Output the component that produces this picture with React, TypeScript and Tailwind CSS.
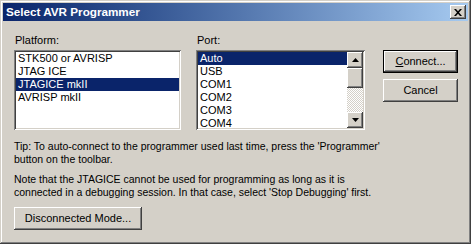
import React from 'react';

const font = { fontFamily: '"Liberation Sans", Arial, sans-serif' };

const raised =
    'bg-[#d4d0c8] shadow-[inset_-1px_-1px_#404040,inset_1px_1px_#ffffff,inset_-2px_-2px_#808080,inset_2px_2px_#d4d0c8]';
const sunken =
    'shadow-[inset_1px_1px_#808080,inset_-1px_-1px_#ffffff,inset_2px_2px_#404040,inset_-2px_-2px_#d4d0c8]';

const Arrow: React.FC<{ up?: boolean }> = ({ up }) => (
    <svg width="7" height="4" viewBox="0 0 7 4">
        {up ? <polygon points="3.5,0 7,4 0,4" fill="#000" /> : <polygon points="0,0 7,0 3.5,4" fill="#000" />}
    </svg>
);

const ListBox: React.FC<{ items: string[]; selected: number; width: string; scroll?: boolean }> = ({ items, selected, width, scroll }) => (
    <div className={`${width} h-[80px] bg-white ${sunken} p-[2px] flex`}>
        <div className="flex-1 overflow-hidden">
            {items.map((it, i) => (
                <div key={it} className={`h-[13px] leading-[13px] pl-[2px] text-[11px] ${i === selected ? 'bg-[#0a246a] text-white' : 'text-black'}`}>
                    {it}
                </div>
            ))}
        </div>
        {scroll && (
            <div className="w-[16px] flex flex-col bg-[repeating-conic-gradient(#d4d0c8_0_25%,#ffffff_0_50%)] bg-[length:2px_2px]">
                <div className={`${raised} h-[16px] flex items-center justify-center`}><Arrow up /></div>
                <div className={`${raised} h-[20px]`} />
                <div className="flex-1" />
                <div className={`${raised} h-[16px] flex items-center justify-center`}><Arrow /></div>
            </div>
        )}
    </div>
);

const Button: React.FC<{ children: React.ReactNode; width: string; isDefault?: boolean }> = ({ children, width, isDefault }) => (
    <div className={`${width} h-[23px] ${isDefault ? 'border border-black' : ''}`}>
        <div className={`${raised} w-full h-full flex items-center justify-center text-[11px] text-black`}>{children}</div>
    </div>
);

export default function App() {
    return (
        <div style={font} className="w-[471px] h-[244px] bg-[#d4d0c8] p-[3px] flex flex-col shadow-[inset_-1px_-1px_#404040,inset_1px_1px_#d4d0c8,inset_-2px_-2px_#808080,inset_2px_2px_#ffffff]">
            <div className="h-[18px] bg-gradient-to-r from-[#0a246a] to-[#a6caf0] flex items-center justify-between pl-[3px] pr-[2px]">
                <span className="text-white font-bold text-[11.7px] leading-none">Select AVR Programmer</span>
                <div className={`${raised} w-[16px] h-[14px] flex items-center justify-center`}>
                    <svg width="8" height="7" viewBox="0 0 8 7">
                        <path d="M0 0h2l2 2.2L6 0h2L5 3.5 8 7H6L4 4.8 2 7H0l3-3.5z" fill="#000" />
                    </svg>
                </div>
            </div>
            <div className="flex-1 pl-[11px] pt-[13px] text-[10.5px] text-black">
                <div className="flex">
                    <div className="flex flex-col">
                        <div className="h-[13px] leading-[13px] mb-[3px] pl-[1px] text-[11px]">Platform:</div>
                        <ListBox width="w-[167px]" items={['STK500 or AVRISP', 'JTAG ICE', 'JTAGICE mkII', 'AVRISP mkII']} selected={2} />
                    </div>
                    <div className="flex flex-col ml-[15px]">
                        <div className="h-[13px] leading-[13px] mb-[3px] pl-[1px] text-[11px]">Port:</div>
                        <ListBox width="w-[169px]" items={['Auto', 'USB', 'COM1', 'COM2', 'COM3', 'COM4']} selected={0} scroll />
                    </div>
                    <div className="flex flex-col ml-[18px] pt-[16px] gap-[6px]">
                        <Button width="w-[75px]" isDefault><span><u>C</u>onnect...</span></Button>
                        <Button width="w-[75px]">Cancel</Button>
                    </div>
                </div>
                <div className="mt-[10px] leading-[13px]">
                    <div>Tip: To auto-connect to the programmer used last time, press the 'Programmer'</div>
                    <div>button on the toolbar.</div>
                </div>
                <div className="mt-[7px] leading-[13px]">
                    <div>Note that the JTAGICE cannot be used for programming as long as it is</div>
                    <div>connected in a debugging session. In that case, select 'Stop Debugging' first.</div>
                </div>
                <div className="mt-[8px]">
                    <Button width="w-[128px]">Disconnected Mode...</Button>
                </div>
            </div>
        </div>
    );
}
